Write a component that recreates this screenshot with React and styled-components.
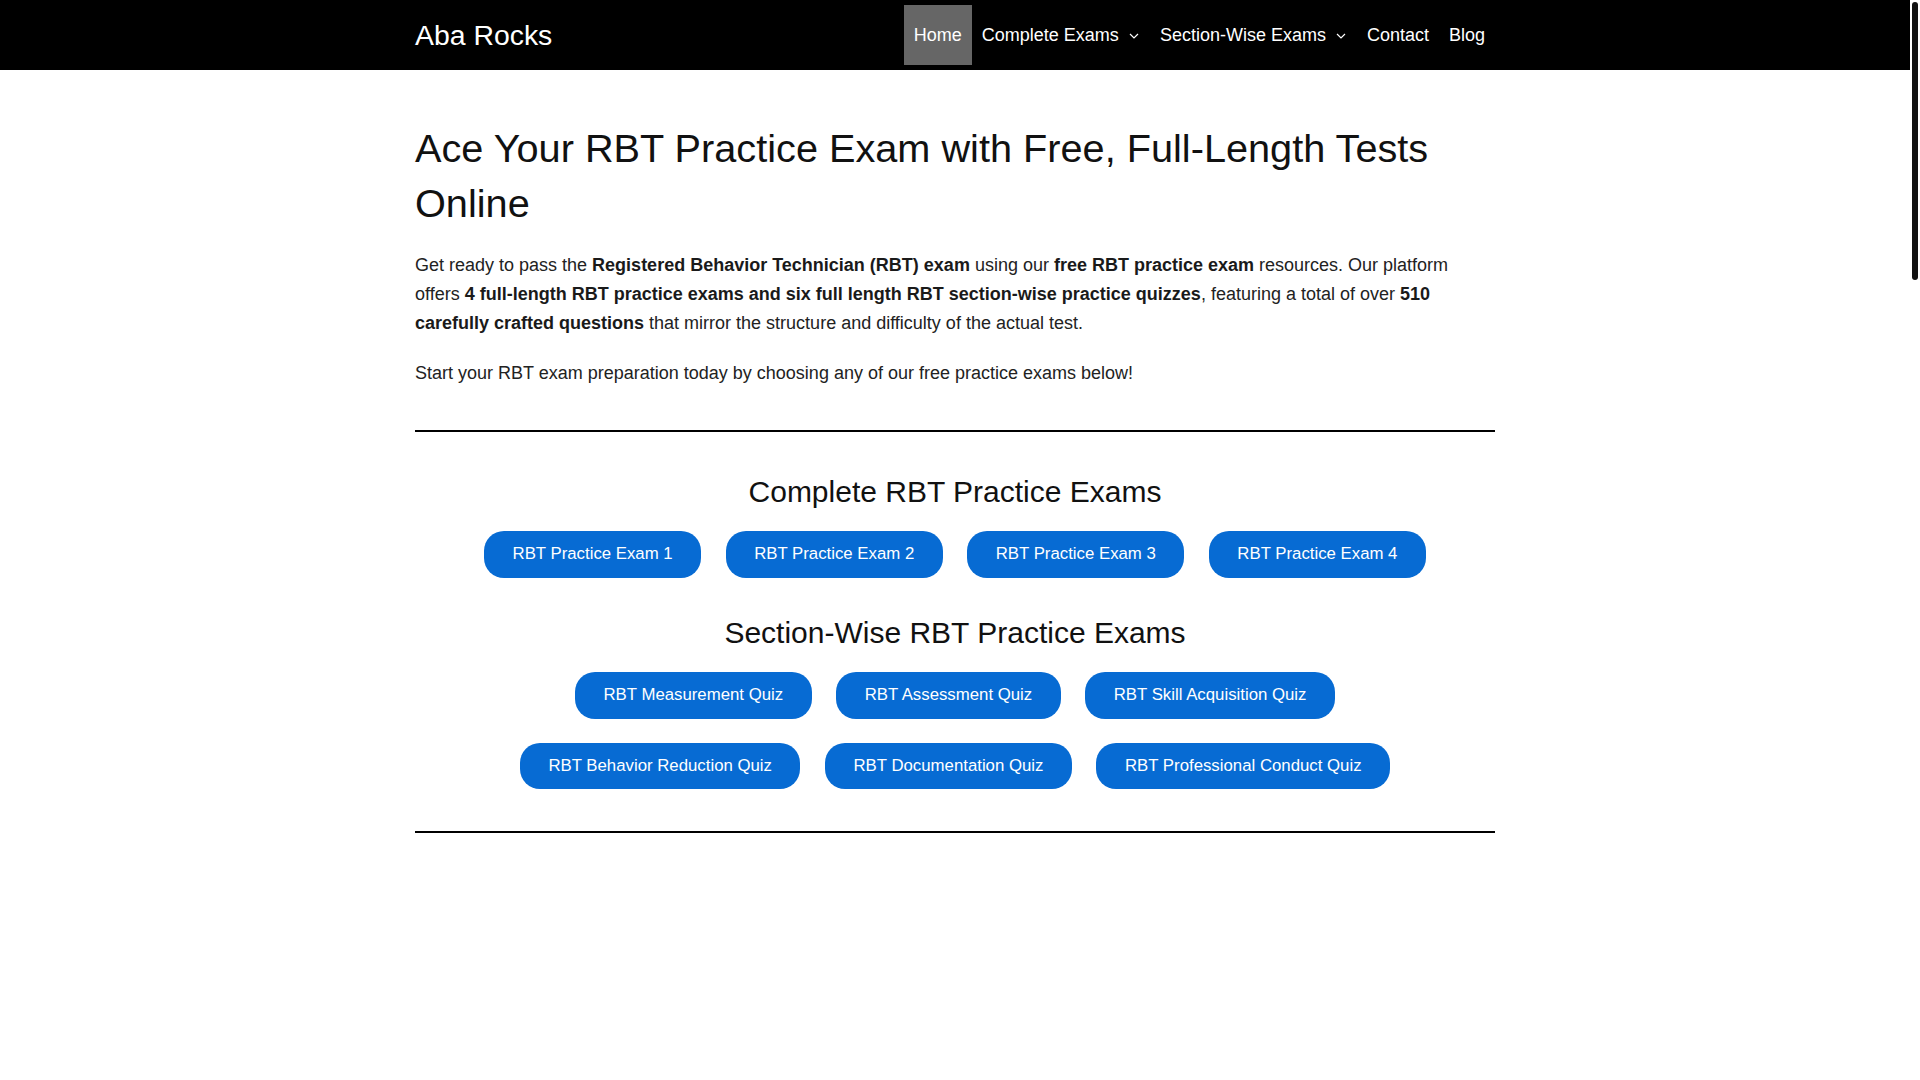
import styled, {createGlobalStyle} from "styled-components";

const GlobalStyle = createGlobalStyle`
    html, body {
        padding: 0;
        background: #fff;
    }

    html {
        margin: 0;
    }

    body {
        margin: 0 10px 0 0;
        font-family: "Liberation Sans", Arial, sans-serif;
        color: #222;
    }
`;

const ScrollThumb = styled.div`
    position: fixed;
    top: 2px;
    right: 2px;
    width: 6px;
    height: 278px;
    background: #111;
    border-radius: 3px;
`;

const Header = styled.header`
    background: #000;
    height: 70px;
`;

const Inner = styled.div`
    max-width: 1080px;
    margin: 0 auto;
`;

const HeaderInner = styled(Inner)`
    display: flex;
    align-items: center;
    justify-content: space-between;
    height: 100%;
`;

const Logo = styled.a`
    color: #fff;
    font-size: 28.4px;
    text-decoration: none;
`;

const Nav = styled.nav`
    display: flex;
    align-items: center;
`;

const NavItem = styled.a`
    display: flex;
    align-items: center;
    height: 60px;
    padding: 0 10px;
    font-size: 18px;
    color: #fff;
    text-decoration: none;
    background: ${p => (p.$active ? "#666" : "transparent")};
`;

const Chevron = styled.svg`
    width: 10px;
    height: 6px;
    margin: 1px 1px 0 10px;
`;

const Main = styled(Inner)`
    padding-top: 51px;
`;

const Title = styled.h1`
    margin: 0 0 20px;
    font-size: 39.7px;
    line-height: 1.39;
    font-weight: 400;
    color: #111;
`;

const Text = styled.p`
    margin: 0 0 21.6px;
    font-size: 18px;
    line-height: 1.6;

    strong {
        font-weight: 700;
        color: #1a1a1a;
    }
`;

const Rule = styled.hr`
    margin: ${p => (p.$top ? "42px 0 0" : "0")};
    border: none;
    height: 2px;
    background: #000;
`;

const Blocks = styled.div`
    display: flex;
    flex-direction: column;
    gap: 37px;
    padding: 42px 0 42px;
`;

const Block = styled.section`
    display: flex;
    flex-direction: column;
    align-items: center;
`;

const BlockTitle = styled.h2`
    margin: 0 0 21px;
    font-size: 30px;
    line-height: 36px;
    font-weight: 400;
    color: #111;
`;

const ButtonStack = styled.div`
    display: flex;
    flex-direction: column;
    align-items: center;
    gap: 24px;
`;

const ButtonGroup = styled.div`
    display: flex;
    flex-wrap: wrap;
    justify-content: center;
    gap: 24px 24.5px;
`;

const ExamButton = styled.a`
    display: inline-block;
    padding: 12px 28.5px;
    font-size: 16.8px;
    line-height: 22.7px;
    color: #fff;
    background: #076bd3;
    border-radius: 20px;
    text-decoration: none;
    white-space: nowrap;
`;

const AdSpace = styled.div`
    height: 3330px;
`;

const complete = ["RBT Practice Exam 1", "RBT Practice Exam 2", "RBT Practice Exam 3", "RBT Practice Exam 4"];

const sections = [
    ["RBT Measurement Quiz", "RBT Assessment Quiz", "RBT Skill Acquisition Quiz"],
    ["RBT Behavior Reduction Quiz", "RBT Documentation Quiz", "RBT Professional Conduct Quiz"]
];

function Caret() {
    return (
        <Chevron viewBox="0 0 10 6" fill="none">
            <path d="M1 1 L5 5 L9 1" stroke="#fff" strokeWidth="1.2"/>
        </Chevron>
    );
}

export default function App() {
    return (
        <>
            <GlobalStyle/>
            <Header>
                <HeaderInner>
                    <Logo href="#">Aba Rocks</Logo>
                    <Nav>
                        <NavItem $active href="#">Home</NavItem>
                        <NavItem href="#">Complete Exams<Caret/></NavItem>
                        <NavItem href="#">Section-Wise Exams<Caret/></NavItem>
                        <NavItem href="#">Contact</NavItem>
                        <NavItem href="#">Blog</NavItem>
                    </Nav>
                </HeaderInner>
            </Header>
            <Main as="main">
                <Title>Ace Your RBT Practice Exam with Free, Full-Length Tests Online</Title>
                <Text>
                    Get ready to pass the <strong>Registered Behavior Technician (RBT) exam</strong> using
                    our <strong>free RBT practice exam</strong> resources. Our platform
                    offers <strong>4 full-length RBT practice exams and six full length RBT section-wise practice
                    quizzes</strong>, featuring a total of over <strong>510 carefully crafted questions</strong> that
                    mirror the structure and difficulty of the actual test.
                </Text>
                <Text>Start your RBT exam preparation today by choosing any of our free practice exams below!</Text>
                <Rule $top/>
                <Blocks>
                    <Block>
                        <BlockTitle>Complete RBT Practice Exams</BlockTitle>
                        <ButtonGroup>
                            {complete.map(label => <ExamButton key={label} href="#">{label}</ExamButton>)}
                        </ButtonGroup>
                    </Block>
                    <Block>
                        <BlockTitle>Section-Wise RBT Practice Exams</BlockTitle>
                        <ButtonStack>
                            {sections.map((row, i) => (
                                <ButtonGroup key={i}>
                                    {row.map(label => <ExamButton key={label} href="#">{label}</ExamButton>)}
                                </ButtonGroup>
                            ))}
                        </ButtonStack>
                    </Block>
                </Blocks>
                <Rule/>
                <AdSpace/>
            </Main>
            <ScrollThumb/>
        </>
    );
}
